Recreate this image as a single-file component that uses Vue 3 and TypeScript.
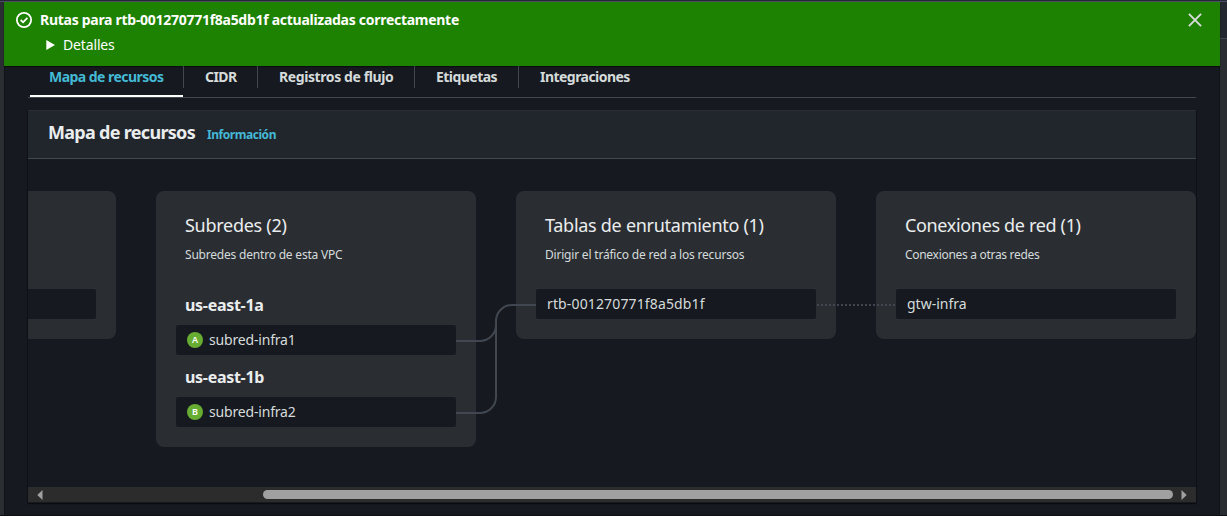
<script setup lang="ts">
interface Resource { name: string; zone?: string; badge?: string }
interface Column { id: string; title: string; description: string; resources: Resource[] }

const tabs = [
  { id: 'map', label: 'Mapa de recursos' },
  { id: 'cidr', label: 'CIDR' },
  { id: 'logs', label: 'Registros de flujo' },
  { id: 'tags', label: 'Etiquetas' },
  { id: 'integrations', label: 'Integraciones' },
]

const columns: Column[] = [
  { id: 'vpc', title: '', description: '', resources: [{ name: '' }] },
  {
    id: 'subnets',
    title: 'Subredes (2)',
    description: 'Subredes dentro de esta VPC',
    resources: [
      { name: 'subred-infra1', zone: 'us-east-1a', badge: 'A' },
      { name: 'subred-infra2', zone: 'us-east-1b', badge: 'B' },
    ],
  },
  {
    id: 'routes',
    title: 'Tablas de enrutamiento (1)',
    description: 'Dirigir el tráfico de red a los recursos',
    resources: [{ name: 'rtb-001270771f8a5db1f' }],
  },
  {
    id: 'connections',
    title: 'Conexiones de red (1)',
    description: 'Conexiones a otras redes',
    resources: [{ name: 'gtw-infra' }],
  },
]
</script>

<template>
  <div class="page">
    <div class="topline"></div>
    <div class="shell">
      <div class="rail left"></div>
      <main class="main">
        <section class="flash">
          <svg class="ok" width="16" height="16" viewBox="0 0 16 16" fill="none" stroke="#fff" stroke-width="1.8">
            <circle cx="8" cy="8" r="7.1" />
            <path d="M4.7 8 7.1 10.3 11.4 5.9" />
          </svg>
          <div class="flash-body">
            <div class="flash-title"><span>Rutas para rtb-001270771f8a5db1f actualizadas correctamente</span></div>
            <div class="details">
              <svg width="9" height="10" viewBox="0 0 9 10"><path d="M.3 0 9 5 .3 10Z" fill="#fff" /></svg>
              <span>Detalles</span>
            </div>
          </div>
          <svg class="close" width="14" height="14" viewBox="0 0 14 14" fill="none" stroke="#d5dbdb" stroke-width="2">
            <path d="M.9.9 13.1 13.1M13.1.9.9 13.1" />
          </svg>
        </section>

        <nav class="tabs">
          <div v-for="(t, i) in tabs" :key="t.id" class="tab" :class="[t.id, { active: i === 0 }]">
            <span>{{ t.label }}</span>
          </div>
        </nav>

        <section class="panel">
          <header class="panel-head">
            <h2>Mapa de recursos</h2>
            <a>Información</a>
          </header>
          <div class="viewport">
            <div class="columns">
              <article v-for="c in columns" :key="c.id" class="column" :class="c.id">
                <h3><span>{{ c.title }}</span></h3>
                <p><span>{{ c.description }}</span></p>
                <div class="resources">
                  <template v-for="r in c.resources" :key="r.name">
                    <h4 v-if="r.zone">{{ r.zone }}</h4>
                    <div class="resource">
                      <i v-if="r.badge" class="badge">{{ r.badge }}</i>
                      <span>{{ r.name }}</span>
                    </div>
                  </template>
                </div>
              </article>
            </div>
            <svg class="links" width="1168" height="328" viewBox="28 159 1168 328" fill="none" stroke="#414750">
              <path stroke-width="2" d="M456 341H480A16 16 0 0 0 496 325V321A16 16 0 0 1 512 305H536M456 413H480A16 16 0 0 0 496 397V321" />
              <path stroke-width="2" stroke-dasharray="2 2" d="M817 305H896" />
            </svg>
          </div>
          <div class="scrollbar">
            <svg width="6" height="10" viewBox="0 0 6 10"><path d="M5.500 0V10L.3 5Z" fill="#a0a0a0" /></svg>
            <div class="track"><div class="thumb"></div></div>
            <svg width="6" height="10" viewBox="0 0 6 10"><path d="M.5 0V10L5.700 5Z" fill="#a0a0a0" /></svg>
          </div>
        </section>
      </main>
      <div class="rail right"><div class="rail-top"></div></div>
    </div>
  </div>
</template>

<style>
body { margin: 0; background: #16191f; overflow: hidden; }
</style>

<style scoped>
* { box-sizing: border-box; }
h2, h3, h4, p { margin: 0; }
span, h2, a, h4 { white-space: nowrap; }
.page { width: 1227px; height: 516px; display: flex; flex-direction: column; background: #16191f; overflow: hidden; font: 14px/20px "Noto Sans", "Open Sans", sans-serif; color: #d5dbdb; }
.topline { flex: none; height: 2px; background: #232738; border-bottom: 1px solid #4a4e60; }
.shell { flex: 1; display: flex; min-height: 0; border-bottom: 1px solid #0d0f13; }
.rail { flex: none; background: #2a2e33; }
.left { width: 4px; }
.right { width: 7px; }
.rail-top { height: 37px; background: #232730; border-bottom: 1px solid #414750; }
.main { flex: 1; min-width: 0; border-left: 1px solid #101317; border-right: 1px solid #101317; }
.flash { display: flex; height: 64px; margin: 0 -1px; padding: 10px 18px 0 12px; background: #1d8102; color: #fff; position: relative; box-shadow: 0 1px 1px #0b0e10; }
.flash-body { flex: 1; margin-left: 8px; }
.flash-title { height: 20px; margin-top: -2px; font-weight: 700; letter-spacing: -.28px; }
.details { display: flex; align-items: center; gap: 8px; height: 20px; margin: 5px 0 0 6px; letter-spacing: -.15px; }
.close { margin-top: 1px; }

.tabs { display: flex; height: 32px; margin: 0 23px; border-bottom: 1px solid #414750; font-weight: 700; letter-spacing: -.54px; }
.tab { position: relative; height: 31px; padding: 1px 0 0 21px; }
.tab:not(:last-child)::after { content: ""; position: absolute; right: 0; top: 0; width: 1px; height: 22px; background: #414750; }
.tab.active { color: #44b9d6; margin-left: 2px; padding-left: 19px; border-bottom: 2px solid #fff; }
.tab.active::after { right: -1px; }
.map { width: 153px; }
.cidr { width: 75px; padding-left: 22px; }
.logs { width: 157px; letter-spacing: -.4px; }
.tags { width: 104px; }

.panel { margin: 12px 23px 0; height: 393px; box-shadow: 0 1px 1px #0a0c0f, 1px 0 0 #0f1216, -1px 0 0 #0f1216; }
.panel-head { display: flex; height: 49px; padding: 11px 20px 0; background: #21252c; border-top: 1px solid #2a2e33; border-bottom: 1px solid #414750; }
h2 { width: 159px; margin-top: -1px; font-size: 18px; line-height: 22px; font-weight: 700; color: #eaeded; letter-spacing: -.7px; }
a { font-size: 12px; line-height: 26px; font-weight: 700; color: #44b9d6; letter-spacing: -.45px; }
.viewport { position: relative; height: 328px; overflow: hidden; }
.columns { display: flex; align-items: flex-start; gap: 40px; width: 1400px; margin-left: -232px; padding-top: 32px; }
.column { width: 320px; padding: 21px 20px 20px; border-radius: 8px; background: #2a2e33; }
h3 { height: 26px; padding-left: 9px; font-size: 18px; line-height: 26px; font-weight: 400; color: #eaeded; letter-spacing: -.28px; }
p { height: 20px; margin-top: 7px; padding-left: 9px; font-size: 12px; line-height: 20px; letter-spacing: -.2px; }
.connections h3 { letter-spacing: -.34px; }
.connections p { letter-spacing: -.3px; }
.resources { margin-top: 24px; }
.resource { display: flex; align-items: center; height: 30px; padding-left: 11px; border-radius: 2px; background: #16191f; }
.routes .resource { letter-spacing: .14px; }
.subnets .resource { letter-spacing: -.18px; }
h4 { height: 31px; padding-left: 9px; font-size: 16px; line-height: 22px; color: #eaeded; letter-spacing: -.3px; }
.subnets .resources { margin-top: 29px; }
.resource + h4 { margin-top: 11px; }
.badge { flex: none; display: grid; place-items: center; width: 16px; height: 16px; margin-right: 6px; border-radius: 50%; background: #67ad32; color: #fff; font: 600 9px/16px "Noto Sans", sans-serif; }
.links { position: absolute; left: 0; top: 0; }
.scrollbar { display: flex; align-items: center; height: 15px; padding: 0 9px; background: #2c2c2c; }
.track { flex: 1; padding: 0 8px 0 220px; }
.thumb { height: 9px; border-radius: 5px; background: #a0a0a0; }
</style>
